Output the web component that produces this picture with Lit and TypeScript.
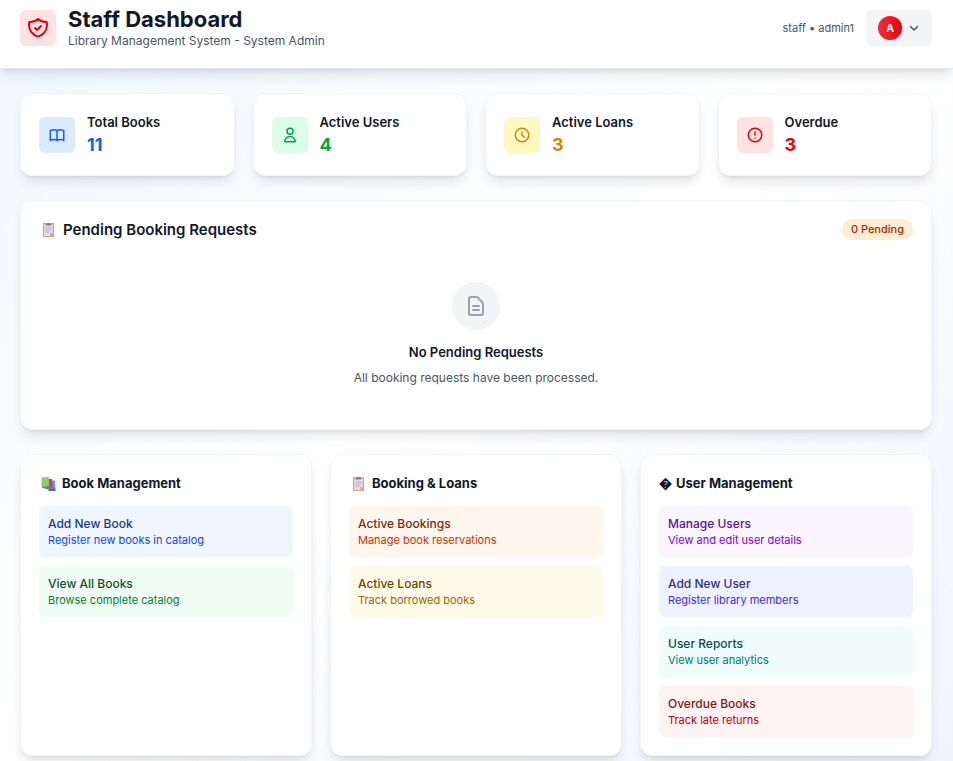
import { LitElement, html, css, svg } from "lit";
import { customElement } from "lit/decorators.js";

const stroke = (size: number, width: number, d: string[]) => html`
  <svg class="icon" width=${size} height=${size} viewBox="0 0 24 24" fill="none" stroke="currentColor"
    stroke-width=${width} stroke-linecap="round" stroke-linejoin="round" aria-hidden="true">
    ${d.map((p) => svg`<path d=${p}></path>`)}
  </svg>`;

const SHIELD = ["M9 12l2 2 4-4m5.618-4.016A11.955 11.955 0 0112 2.944a11.955 11.955 0 01-8.618 3.04A12.02 12.02 0 003 9c0 5.591 3.824 10.29 9 11.622 5.176-1.332 9-6.03 9-11.622 0-1.042-.133-2.052-.382-3.016z"];
const BOOK = ["M12 6.253v13m0-13C10.832 5.477 9.246 5 7.5 5S4.168 5.477 3 6.253v13C4.168 18.477 5.754 18 7.5 18s3.332.477 4.5 1.253m0-13C13.168 5.477 14.754 5 16.5 5c1.747 0 3.332.477 4.5 1.253v13C19.832 18.477 18.247 18 16.5 18c-1.746 0-3.332.477-4.5 1.253"];
const USER = ["M16 7a4 4 0 11-8 0 4 4 0 018 0zM12 14a7 7 0 00-7 7h14a7 7 0 00-7-7z"];
const CLOCK = ["M12 8v4l3 3m6-3a9 9 0 11-18 0 9 9 0 0118 0z"];
const ALERT = ["M12 8v4m0 4h.01M21 12a9 9 0 11-18 0 9 9 0 0118 0z"];
const DOC = ["M9 12h6m-6 4h6m2 5H7a2 2 0 01-2-2V5a2 2 0 012-2h5.586a1 1 0 01.707.293l5.414 5.414a1 1 0 01.293.707V19a2 2 0 01-2 2z"];
const CHEVRON = ["M19 9l-7 7-7-7"];

const clipboard = html`
  <svg class="emoji" viewBox="0 0 16 16" aria-hidden="true">
    <rect x="2" y="1" width="12" height="15" rx="1" fill="#dfa074"></rect>
    <path d="M3.400 2.500h9.200v9.500l-2.800 2.800H3.400z" fill="#e6dcee"></path>
    <path d="M12.600 12l-2.800 2.800V12z" fill="#b9a5c9"></path>
    <path d="M5 3.800V1.800h1.600a1.500 1.500 0 012.800 0H11v2z" fill="#877d8d"></path>
    <path d="M4.800 6.300h6.400M4.800 8.500h6.400M4.800 10.700h4" stroke="#b5abc4" stroke-width="1"></path>
  </svg>`;

const books = html`
  <svg class="emoji" viewBox="0 0 16 16" aria-hidden="true">
    <path d="M9 5l5.500-.5 1 9.500H9z" fill="#35a8ee"></path>
    <path d="M8 13.500h7.500V16H8z" fill="#3c6fc4"></path>
    <path d="M5.500 3.500L11.500 3l1 9.500H6z" fill="#e33366"></path>
    <path d="M4.500 12h8v2h-8z" fill="#a45c86"></path>
    <path d="M.5 1.500L8 1l.8 9.800H.5z" fill="#86d364"></path>
    <path d="M.5 10.800h8.300V13H1.500z" fill="#4f9b63"></path>
  </svg>`;

const stats = [
  { label: "Total Books", value: 11, tone: "blue", icon: BOOK },
  { label: "Active Users", value: 4, tone: "green", icon: USER },
  { label: "Active Loans", value: 3, tone: "yellow", icon: CLOCK },
  { label: "Overdue", value: 3, tone: "red", icon: ALERT },
];

const groups = [
  { title: "Book Management", mark: books, links: [
    ["Add New Book", "Register new books in catalog", "l-blue"],
    ["View All Books", "Browse complete catalog", "l-green"],
  ] },
  { title: "Booking & Loans", mark: clipboard, links: [
    ["Active Bookings", "Manage book reservations", "l-orange"],
    ["Active Loans", "Track borrowed books", "l-yellow"],
  ] },
  { title: "User Management", mark: html`<span>\uFFFD</span>`, links: [
    ["Manage Users", "View and edit user details", "l-purple"],
    ["Add New User", "Register library members", "l-indigo"],
    ["User Reports", "View user analytics", "l-teal"],
    ["Overdue Books", "Track late returns", "l-red"],
  ] },
];

@customElement("app-root")
export class AppRoot extends LitElement {
  static styles = css`
    :host {
      display: block;
      min-height: 100vh;
      box-sizing: border-box;
      background: linear-gradient(to bottom right, #f1f7ff, #ffffff, #f1f4ff);
      font-family: Inter, "Liberation Sans", sans-serif;
      color: #101828;
    }
    * { box-sizing: border-box; }
    h1, h2, h3, p { margin: 0; }
    .icon { display: block; flex: none; }
    .wrap { max-width: 912px; margin: 0 auto; }
    header {
      background: #fff;
      border-bottom: 1px solid #e5e7eb;
      box-shadow: 0 8px 12px -2px rgb(0 0 0 / 0.1), 0 3px 5px -3px rgb(0 0 0 / 0.1);
      padding: 6px 21px 18px 20px;
    }
    .bar { display: flex; justify-content: space-between; align-items: center; }
    .brand, .account { display: flex; align-items: center; gap: 12px; }
    .tile {
      width: 36px; height: 36px; flex: none;
      display: grid; place-items: center;
      border-radius: 6px;
    }
    h1 { font-size: 22px; line-height: 26px; font-weight: 700; }
    .sub { font-size: 12px; line-height: 18px; color: #4a5565; }
    .who { font-size: 11px; line-height: 16px; color: #4a5565; }
    .menu {
      display: flex; align-items: center; gap: 6px;
      height: 36px; padding: 0 12px;
      border: 0; border-radius: 6px;
      background: #f3f4f6; color: #4a5565;
      font: inherit;
    }
    .avatar {
      width: 24px; height: 24px; border-radius: 50%;
      display: grid; place-items: center;
      background: linear-gradient(to right, #fb2c36, #e7000b);
      color: #fff; font-size: 11px; font-weight: 700;
    }
    main { padding: 24px 21px 6px 20px; }
    .stack { display: flex; flex-direction: column; gap: 24px; }
    .card {
      background: #fff;
      border: 1px solid #f3f4f6;
      border-radius: 12px;
      box-shadow: 0 8px 12px -2px rgb(0 0 0 / 0.1), 0 3px 5px -3px rgb(0 0 0 / 0.1);
      padding: 18px;
    }
    .stats { display: grid; grid-template-columns: repeat(4, 1fr); gap: 18px; }
    .stat { display: flex; align-items: center; gap: 12px; height: 83px; }
    .stat h2 { font-size: 13px; line-height: 20px; font-weight: 600; }
    .num { font-size: 18px; line-height: 26px; font-weight: 700; }
    .blue .tile { background: #dbeafe; } .blue .tile, .blue .num { color: #155dfc; }
    .green .tile { background: #dcfce7; } .green .tile, .green .num { color: #00a63e; }
    .yellow .tile { background: #fef9c2; } .yellow .tile, .yellow .num { color: #d08700; }
    .red .tile, .tile.red { background: #ffe2e2; color: #e7000b; } .red .num { color: #e7000b; }
    .pending { min-height: 230px; }
    .head { display: flex; justify-content: space-between; align-items: center; }
    .head h2 { display: flex; align-items: center; gap: 5px; font-size: 15px; line-height: 21px; font-weight: 600; }
    .badge {
      background: #ffedd4; color: #9f2d00; border-radius: 11px;
      padding: 0 9px; font-size: 11px; line-height: 21px; font-weight: 500;
    }
    .empty { display: flex; flex-direction: column; align-items: center; padding-top: 42px; text-align: center; }
    .round {
      width: 48px; height: 48px; border-radius: 50%;
      display: grid; place-items: center;
      background: #f3f4f6; color: #99a1af; margin-bottom: 12px;
    }
    .empty h3 { font-size: 13px; line-height: 20px; font-weight: 600; margin-bottom: 6px; }
    .empty p { font-size: 12px; line-height: 20px; color: #4a5565; }
    .groups { display: grid; grid-template-columns: repeat(3, 1fr); gap: 18px; }
    .group h2 { display: flex; align-items: center; gap: 4px; font-size: 13px; line-height: 21px; font-weight: 700; margin-bottom: 12px; }
    .emoji { width: 15px; height: 15px; flex: none; margin: 0 2px; }
    .links { display: flex; flex-direction: column; gap: 9px; }
    .link { display: block; border-radius: 6px; padding: 9px; text-decoration: none; }
    .link strong { display: block; font-size: 12px; line-height: 18px; font-weight: 500; }
    .link span { display: block; font-size: 11px; line-height: 15px; }
    .l-blue { background: #eff6ff; color: #1447e6; } .l-blue strong { color: #1c398e; }
    .l-green { background: #f0fdf4; color: #008236; } .l-green strong { color: #0d542b; }
    .l-orange { background: #fff7ed; color: #ca3500; } .l-orange strong { color: #7e2a0c; }
    .l-yellow { background: #fefce8; color: #a65f00; } .l-yellow strong { color: #733e0a; }
    .l-purple { background: #faf5ff; color: #8200db; } .l-purple strong { color: #59168b; }
    .l-indigo { background: #eef2ff; color: #432dd7; } .l-indigo strong { color: #312c85; }
    .l-teal { background: #f0fdfa; color: #00786f; } .l-teal strong { color: #0b4f4a; }
    .l-red { background: #fef2f2; color: #c10007; } .l-red strong { color: #82181a; }
    @media (max-width: 700px) {
      .stats { grid-template-columns: repeat(2, 1fr); }
      .groups { grid-template-columns: 1fr; }
    }
  `;

  render() {
    return html`
      <header>
        <div class="wrap bar">
          <div class="brand">
            <div class="tile red">${stroke(24, 2, SHIELD)}</div>
            <div>
              <h1>Staff Dashboard</h1>
              <p class="sub">Library Management System - System Admin</p>
            </div>
          </div>
          <div class="account">
            <span class="who">staff • admin1</span>
            <button class="menu" type="button" aria-label="Account menu">
              <span class="avatar">A</span>${stroke(12, 3, CHEVRON)}
            </button>
          </div>
        </div>
      </header>
      <main>
        <div class="wrap stack">
          <section class="stats">
            ${stats.map((s) => html`
              <div class="card stat ${s.tone}">
                <div class="tile">${stroke(18, 2, s.icon)}</div>
                <div><h2>${s.label}</h2><p class="num">${s.value}</p></div>
              </div>`)}
          </section>
          <section class="card pending">
            <div class="head">
              <h2>${clipboard}Pending Booking Requests</h2>
              <span class="badge">0 Pending</span>
            </div>
            <div class="empty">
              <div class="round">${stroke(24, 2, DOC)}</div>
              <h3>No Pending Requests</h3>
              <p>All booking requests have been processed.</p>
            </div>
          </section>
          <section class="groups">
            ${groups.map((g) => html`
              <div class="card group">
                <h2>${g.mark}${g.title}</h2>
                <nav class="links" aria-label=${g.title}>
                  ${g.links.map(([t, d, c]) => html`<a class="link ${c}" href="#"><strong>${t}</strong><span>${d}</span></a>`)}
                </nav>
              </div>`)}
          </section>
        </div>
      </main>`;
  }
}
